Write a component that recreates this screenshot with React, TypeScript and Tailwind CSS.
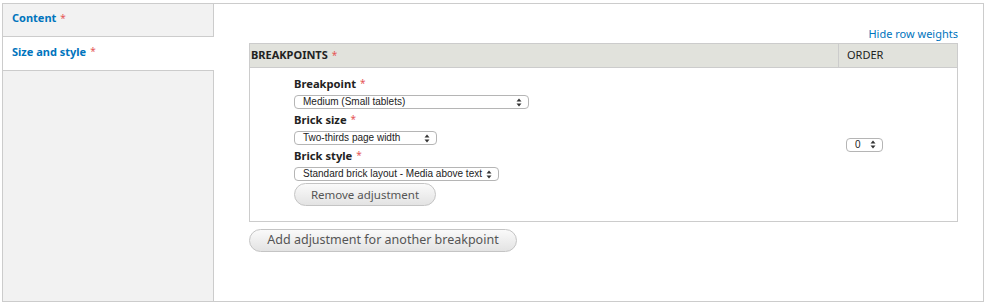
import React from "react";

const Arrows = () => (
  <svg width="6" height="9" viewBox="0 0 6 9" className="shrink-0">
    <path d="M0.5 3.5 L3 0.5 L5.5 3.5 Z" fill="#333" />
    <path d="M0.5 5.5 L3 8.5 L5.5 5.5 Z" fill="#333" />
  </svg>
);

const FakeSelect = ({ text, width }: { text: string; width: string }) => (
  <div
    className={`${width} h-[14px] flex items-center justify-between pl-[8px] pr-[6px] border border-[#b5b5b5] rounded-[4px] bg-white text-[10px] leading-none text-[#222]`}
    style={{ fontFamily: '"Liberation Sans", Arial, sans-serif' }}
  >
    <span>{text}</span>
    <Arrows />
  </div>
);

const Star = () => (
  <span className="ml-[4px] text-[10px] leading-none text-[#e55757] font-normal relative -top-[1px]">*</span>
);

const Label = ({ children }: { children: React.ReactNode }) => (
  <div className="flex items-center text-[11.2px] font-bold text-[#222] leading-[16px] h-[16px]">
    {children}
    <Star />
  </div>
);

const Button = ({ children, width, size }: { children: React.ReactNode; width: string; size: string }) => (
  <div
    className={`${width} ${size} h-[23px] flex items-center justify-center rounded-full border border-[#c4c4c4] text-[#555555] bg-gradient-to-b from-[#fafafa] to-[#e3e3e3]`}
  >
    {children}
  </div>
);

export default function App() {
  return (
    <div
      className="w-[990px] h-[307px] bg-white pt-[3px] pl-[2px]"
      style={{ fontFamily: '"Noto Sans", "DejaVu Sans", sans-serif' }}
    >
      <div className="w-[982px] h-[299px] border border-[#cccccc] flex">
        <div className="w-[211px] flex flex-col bg-[#f2f2f2] border-r border-[#cccccc]">
          <div className="h-[33px] flex items-center pl-[9px] pb-[3px] border-b border-[#cccccc] text-[11px] font-bold text-[#0074bd]">
            Content<Star />
          </div>
          <div className="h-[34px] flex items-center pl-[9px] pb-[3px] border-b border-[#cccccc] bg-white -mr-[1px] text-[11px] font-bold text-[#0074bd]">
            Size and style<Star />
          </div>
        </div>
        <div className="flex-1 pl-[35px] pr-[25px] pt-[22px]">
          <div className="h-[15px] mb-[2px] flex justify-end items-center text-[11px] text-[#0074bd] leading-none">
            Hide row weights
          </div>
          <div className="border border-[#cccccc]">
            <div className="h-[24px] flex bg-[#e1e2dc] border-b border-[#cccccc] text-[11px] text-[#222]">
              <div className="flex-1 flex items-center pl-[1px] font-bold">
                BREAKPOINTS<Star />
              </div>
              <div className="w-[119px] flex items-center pl-[8px] border-l border-[#cccccc]">ORDER</div>
            </div>
            <div className="h-[153px] flex">
              <div className="flex-1 pl-[44px] pt-[8px] flex flex-col">
                <Label>Breakpoint</Label>
                <div className="mt-[3px]">
                  <FakeSelect text="Medium (Small tablets)" width="w-[235px]" />
                </div>
                <div className="mt-[3px]">
                  <Label>Brick size</Label>
                </div>
                <div className="mt-[3px]">
                  <FakeSelect text="Two-thirds page width" width="w-[143px]" />
                </div>
                <div className="mt-[3px]">
                  <Label>Brick style</Label>
                </div>
                <div className="mt-[3px]">
                  <FakeSelect text="Standard brick layout - Media above text" width="w-[205px]" />
                </div>
                <div className="mt-[2px]">
                  <Button width="w-[142px]" size="text-[11.5px]">Remove adjustment</Button>
                </div>
              </div>
              <div className="w-[120px] flex items-center pl-[9px]">
                <FakeSelect text="0" width="w-[37px]" />
              </div>
            </div>
          </div>
          <div className="mt-[7px]">
            <Button width="w-[268px]" size="text-[12.5px]">Add adjustment for another breakpoint</Button>
          </div>
        </div>
      </div>
    </div>
  );
}
